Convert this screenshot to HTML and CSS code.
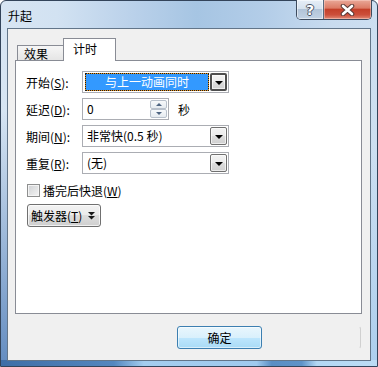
FILE: index.html
```html
<!DOCTYPE html>
<html lang="zh-CN">
<head>
    <meta charset="UTF-8">
    <title>升起</title>
    <link rel="stylesheet" href="styles.css">
</head>
<body>

<div class="window">
    <div class="titlebar">
        <span class="title">升起</span>
        <div class="caption-buttons">
            <div class="cap-btn help"><span>?</span></div>
            <div class="cap-btn close">
                <svg width="15" height="12" viewBox="0 0 15 12">
                    <path d="M3 2 L12 10 M12 2 L3 10" stroke="#5a3a36" stroke-width="4.6" stroke-linecap="round"/>
                    <path d="M3 2 L12 10 M12 2 L3 10" stroke="#fff" stroke-width="2.6" stroke-linecap="round"/>
                </svg>
            </div>
        </div>
    </div>

    <div class="client">
        <div class="tabs">
            <div class="tab">效果</div>
            <div class="tab active">计时</div>
        </div>

        <div class="panel">
            <div class="form">
                <label>开始(<u>S</u>):</label>
                <div class="combo focused">
                    <div class="combo-value">与上一动画同时</div>
                    <div class="combo-btn"><i class="arrow"></i></div>
                </div>

                <label>延迟(<u>D</u>):</label>
                <div class="spin-row">
                    <div class="spin">
                        <span class="spin-value">0</span>
                        <div class="spin-btns">
                            <div class="spin-btn"><i class="up"></i></div>
                            <div class="spin-btn"><i class="down"></i></div>
                        </div>
                    </div>
                    <span class="unit">秒</span>
                </div>

                <label>期间(<u>N</u>):</label>
                <div class="combo">
                    <div class="combo-value">非常快(0.5 秒)</div>
                    <div class="combo-btn"><i class="arrow"></i></div>
                </div>

                <label>重复(<u>R</u>):</label>
                <div class="combo">
                    <div class="combo-value">(无)</div>
                    <div class="combo-btn"><i class="arrow"></i></div>
                </div>
            </div>

            <div class="check-row">
                <span class="checkbox"></span>
                <span>播完后快退(<u>W</u>)</span>
            </div>

            <div class="trigger">
                <span>触发器(<u>T</u>)</span>
                <svg width="9" height="10" viewBox="0 0 9 10">
                    <path d="M1 1 L8 1 L4.5 4.5 Z" fill="#1a1a1a"/>
                    <path d="M1 5 L8 5 L4.5 8.5 Z" fill="#1a1a1a"/>
                </svg>
            </div>
        </div>

        <div class="footer">
            <div class="btn ok">确定</div>
            <div class="ghost"></div>
        </div>
    </div>
</div>

</body>
</html>
```

FILE: styles.css
```css
/* Page */
body {
    margin: 0;
    width: 378px;
    height: 367px;
    overflow: hidden;
    background: #ffffff;
    font-family: "Noto Sans CJK SC", "Noto Sans", sans-serif;
    font-size: 12px;
    color: #000;
}

u {
    text-decoration: underline;
    text-underline-offset: 1px;
}

/* Window frame */
.window {
    box-sizing: border-box;
    width: 378px;
    height: 367px;
    border: 1px solid #33445a;
    border-radius: 6px 6px 0 0;
    display: flex;
    flex-direction: column;
    background:
        linear-gradient(90deg, #3e6ea6 0%, #5487bf 30%, #a4cdef 38%, #9fcaee 68%, #5a8ec4 72%, #5f93c8 80%, #b3d8f4 84%, #bcdcf4 100%) bottom / 100% 6px no-repeat,
        linear-gradient(to bottom, rgba(60, 110, 175, 0) 30%, rgba(60, 110, 175, 0.75) 100%) left / 7px 100% no-repeat,
        linear-gradient(to bottom, rgba(150, 195, 235, 0) 40%, rgba(150, 195, 235, 0.6) 100%) right / 7px 100% no-repeat,
        linear-gradient(90deg, #d7e5f3 0%, #d2e2f2 15%, #bad1ea 35%, #a6c5e3 52%, #b3cde8 70%, #c8dbef 88%, #cddff1 100%);
}

/* Title bar */
.titlebar {
    height: 27px;
    display: flex;
    justify-content: space-between;
    align-items: flex-start;
    padding: 0 5px 0 7px;
}

.title {
    margin-top: 7px;
    line-height: 15px;
    color: #000;
}

.caption-buttons {
    display: flex;
    margin-top: -1px;
    border: 1px solid #3d4b5e;
    border-top: none;
    border-radius: 0 0 5px 5px;
    overflow: hidden;
    height: 19px;
}

.cap-btn {
    display: flex;
    align-items: center;
    justify-content: center;
    height: 19px;
}

.help {
    width: 26px;
    border-right: 1px solid #5a6a7e;
    background: linear-gradient(#e6eef7 0%, #d6e2ee 45%, #b2c4d8 50%, #c2d2e4 100%);
    box-shadow: inset 0 0 0 1px rgba(255, 255, 255, 0.5);
}

.help span {
    font-family: "DejaVu Sans", sans-serif;
    font-weight: bold;
    font-size: 14px;
    color: #fff;
    text-shadow: 1px 0 #4a5566, -1px 0 #4a5566, 0 1px #4a5566, 0 -1px #4a5566;
}

.close {
    width: 47px;
    background: linear-gradient(#e9a898 0%, #dc7b66 42%, #c4402a 50%, #cc4f3b 78%, #e08a76 100%);
    box-shadow: inset 0 0 0 1px rgba(255, 220, 210, 0.45);
}

/* Client area */
.client {
    box-sizing: border-box;
    height: 333px;
    margin: 0 6px;
    border: 1px solid #627589;
    background: #f0f0f0;
    display: flex;
    flex-direction: column;
}

/* Tabs */
.tabs {
    display: flex;
    align-items: flex-end;
    height: 23px;
    margin-top: 9px;
    padding-left: 9px;
}

.tab {
    box-sizing: border-box;
    border: 1px solid #898c95;
    border-bottom: none;
    padding-left: 6px;
}

.tab:not(.active) {
    width: 47px;
    height: 16px;
    line-height: 15px;
    background: linear-gradient(#f6f6f6, #e4e4e4);
}

.tab.active {
    position: relative;
    z-index: 1;
    width: 53px;
    height: 23px;
    margin-left: -1px;
    padding-left: 9px;
    line-height: 19px;
    background: #fff;
}

/* Panel */
.panel {
    box-sizing: border-box;
    width: 347px;
    height: 254px;
    margin: -1px 0 0 7px;
    border: 1px solid #898c95;
    background: #fff;
    padding: 10px 10px;
}

.form {
    display: grid;
    grid-template-columns: 56px 147px;
    grid-auto-rows: 22px;
    row-gap: 5px;
    align-items: center;
}

/* Combo boxes */
.combo {
    box-sizing: border-box;
    height: 22px;
    border: 1px solid #abadb3;
    padding: 1px;
    display: flex;
    background: #fff;
}

.combo-value {
    flex: 1;
    padding-left: 3px;
    line-height: 18px;
    white-space: nowrap;
}

.combo.focused .combo-value {
    box-sizing: border-box;
    margin: 0 1px 0 1px;
    padding: 0;
    border: 1px dotted #1b1b1b;
    line-height: 16px;
    text-align: center;
    color: #fff;
    background: linear-gradient(#3399ff, #3399ff) padding-box, linear-gradient(#e8931e, #e8931e) border-box;
}

.combo-btn {
    box-sizing: border-box;
    width: 17px;
    border: 1px solid #707070;
    border-radius: 2px;
    display: flex;
    align-items: center;
    justify-content: center;
    background: linear-gradient(#f3f3f3 0%, #ebebeb 50%, #dddddd 50%, #d0d0d0 100%);
    box-shadow: inset 0 0 0 1px rgba(255, 255, 255, 0.6);
}

.combo.focused .combo-btn {
    border: 2px solid #4e4e4e;
}

.arrow {
    width: 0;
    height: 0;
    border-left: 4px solid transparent;
    border-right: 4px solid transparent;
    border-top: 4px solid #000;
    margin-top: 1px;
}

/* Spin box */
.spin-row {
    display: flex;
    align-items: center;
}

.spin {
    box-sizing: border-box;
    width: 87px;
    height: 22px;
    border: 1px solid #abadb3;
    display: flex;
    justify-content: space-between;
    padding: 1px;
}

.spin-value {
    padding-left: 3px;
    line-height: 18px;
}

.spin-btns {
    display: flex;
    flex-direction: column;
    gap: 0;
    width: 17px;
}

.spin-btn {
    box-sizing: border-box;
    flex: 1;
    border: 1px solid #b8c0cb;
    border-radius: 2px;
    display: flex;
    align-items: center;
    justify-content: center;
    background: linear-gradient(#f7f9fb, #e6ebf0);
}

.spin-btn i {
    width: 0;
    height: 0;
    border-left: 3px solid transparent;
    border-right: 3px solid transparent;
}

.spin-btn .up {
    border-bottom: 3px solid #4f6582;
}

.spin-btn .down {
    border-top: 3px solid #4f6582;
}

.unit {
    margin-left: 9px;
}

/* Checkbox */
.check-row {
    display: flex;
    align-items: center;
    gap: 3px;
    margin: 10px 0 0 1px;
    height: 13px;
}

.checkbox {
    box-sizing: border-box;
    width: 13px;
    height: 13px;
    border: 1px solid #8e8f8f;
    background: linear-gradient(135deg, #cfd1d4, #f4f4f4);
    box-shadow: inset 0 0 0 1px #f4f4f4;
}

/* Trigger button */
.trigger {
    box-sizing: border-box;
    width: 74px;
    height: 23px;
    margin: 7px 0 0 1px;
    border: 1px solid #707070;
    border-radius: 3px;
    display: flex;
    align-items: center;
    gap: 5px;
    padding-left: 3px;
    background: linear-gradient(#f2f2f2 0%, #ebebeb 50%, #dddddd 50%, #cfcfcf 100%);
    box-shadow: inset 0 0 0 1px rgba(255, 255, 255, 0.7);
}

/* Footer buttons */
.footer {
    display: flex;
    gap: 14px;
    margin-top: 12px;
    padding-left: 169px;
}

.btn {
    box-sizing: border-box;
    width: 85px;
    height: 23px;
    border-radius: 3px;
    text-align: center;
    line-height: 21px;
}

.ok {
    border: 1px solid #3c7fb1;
    background: linear-gradient(#e9f6fd 0%, #d9f0fc 50%, #bee6fd 50%, #a9dbf6 100%);
    box-shadow: inset 0 0 0 1px rgba(255, 255, 255, 0.55);
}

.ghost {
    box-sizing: border-box;
    width: 85px;
    height: 23px;
    border: 1px solid transparent;
    border-right-color: rgba(150, 150, 150, 0.35);
    border-radius: 3px;
}
```
